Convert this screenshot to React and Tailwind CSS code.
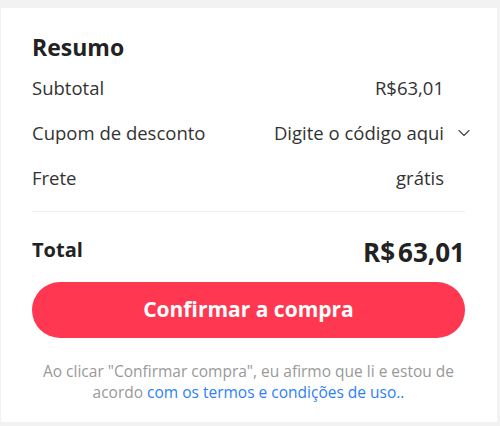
import { ChevronDown } from 'lucide-react';

const ROWS = [
  { label: 'Subtotal', value: 'R$63,01' },
  { label: 'Cupom de desconto', value: 'Digite o código aqui', dropdown: true },
  { label: 'Frete', value: 'grátis' },
];

export default function App() {
  return (
    <div className="min-h-[426px] bg-[#f2f2f2] pt-2" style={{ fontFamily: '"Open Sans", sans-serif' }}>
      <div className="ml-px w-[496px] bg-white pl-[31px] pr-8 pt-6 pb-[19px]">
        <h2 className="text-[23px] leading-[30px] font-bold text-[#222]">Resumo</h2>

        {/* Linhas do resumo */}
        <div className="mt-[14px] flex flex-col gap-[21px]">
          {ROWS.map(row => (
            <div key={row.label} className="flex items-center justify-between text-[18.5px] leading-[24px] text-[#333]">
              <span>{row.label}</span>
              {row.dropdown ? (
                <button className="flex items-center -mr-[9px] text-[#333]">
                  <span>{row.value}</span>
                  <ChevronDown size={20} strokeWidth={1.3} className="ml-[10px] text-[#444]" />
                </button>
              ) : (
                <span className="pr-[21px]">{row.value}</span>
              )}
            </div>
          ))}
        </div>

        <div className="mt-[21px] h-px bg-[#eeeeee]" />

        <div className="mt-6 flex items-center justify-between text-[#222] font-bold">
          <span className="text-[20px] leading-[28px] pb-1">Total</span>
          <span className="text-[26px] leading-[32px]">
            R$<span className="ml-[3px]">63,01</span>
          </span>
        </div>

        <button className="mt-[14px] h-14 w-full rounded-full bg-[#ff3750] text-[21px] font-bold text-white">
          Confirmar a compra
        </button>

        <p className="mt-[23px] text-center text-[15.5px] leading-[21px] text-[#999]">
          Ao clicar "Confirmar compra", eu afirmo que li e estou de acordo{' '}
          <a className="text-[#2d7ff9]">com os termos e condições de uso..</a>
        </p>
      </div>
    </div>
  );
}
